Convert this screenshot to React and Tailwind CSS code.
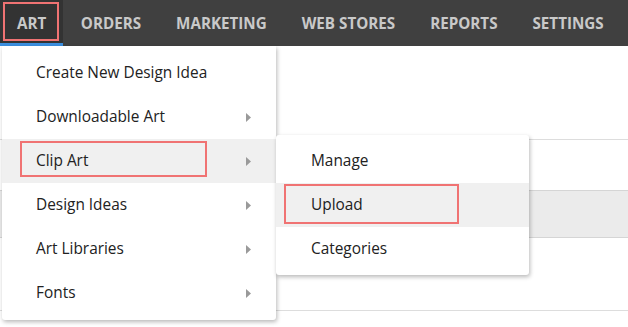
import React from "react";

const navItems = ["ART", "ORDERS", "MARKETING", "WEB STORES", "REPORTS", "SETTINGS"];

const artMenu = [
    { label: "Create New Design Idea" },
    { label: "Downloadable Art", sub: true },
    { label: "Clip Art", sub: true, active: true },
    { label: "Design Ideas", sub: true },
    { label: "Art Libraries", sub: true },
    { label: "Fonts", sub: true },
];

const clipMenu = [
    { label: "Manage" },
    { label: "Upload", active: true },
    { label: "Categories" },
];

function Caret() {
    return (
        <svg width="5" height="9" viewBox="0 0 5 9" className="absolute left-[244px] top-[18px]">
            <path d="M0 0 L5 4.5 L0 9 Z" fill="#9a9a9a" />
        </svg>
    );
}

export default function App() {
    return (
        <div className="relative w-[628px] h-[327px] bg-white overflow-hidden font-['Open_Sans',sans-serif]">
            {/* top nav */}
            <div className="flex h-[46px] bg-[#404040]">
                {navItems.map((item, i) => (
                    <div
                        key={item}
                        className={
                            i === 0
                                ? "relative shrink-0 flex items-center px-[17px] bg-[#333333] border-b-[3px] border-[#3b8fe0] pt-[3px]"
                                : "shrink-0 flex items-center px-[17.5px]"
                        }
                    >
                        <span className="whitespace-nowrap text-[15.2px] font-bold text-[#c9c9c9]">{item}</span>
                        {i === 0 && (
                            <div className="absolute left-[3px] top-[2px] w-[56px] h-[39px] border-2 border-[#f07373]" />
                        )}
                    </div>
                ))}
            </div>

            {/* page content behind menus */}
            <div className="flex flex-col">
                <div className="h-[94px] border-b border-[#dddddd]" />
                <div className="h-[50px]" />
                <div className="h-[48px] bg-[#ebebeb] border-y border-[#d5d5d5]" />
                <div className="h-[73px] border-b border-[#dddddd]" />
            </div>

            {/* art dropdown */}
            <div className="absolute left-[2px] top-[46px] w-[274px] bg-white pt-[5px] pb-[5px] rounded-b-[3px] shadow-[1px_2px_4px_rgba(0,0,0,0.28)]">
                {artMenu.map((m) => (
                    <div
                        key={m.label}
                        className={
                            "relative h-[44px] flex items-center pl-[34px] pb-[1px] text-[15.4px] text-[#222222] " +
                            (m.active ? "bg-[#f0f0f0]" : "")
                        }
                    >
                        {m.label}
                        {m.sub && <Caret />}
                        {m.active && (
                            <div className="absolute left-[18px] top-[2px] w-[187px] h-[36px] border-2 border-[#f07373]" />
                        )}
                    </div>
                ))}
            </div>

            {/* clip art submenu */}
            <div className="absolute left-[276px] top-[135px] w-[253px] bg-white py-[4px] rounded-[3px] shadow-[1px_2px_4px_rgba(0,0,0,0.28)]">
                {clipMenu.map((m) => (
                    <div
                        key={m.label}
                        className={
                            "relative h-[44px] flex items-center pl-[35px] pb-[1px] text-[15.4px] text-[#222222] " +
                            (m.active ? "bg-[#f0f0f0]" : "")
                        }
                    >
                        {m.label}
                        {m.active && (
                            <div className="absolute left-[8px] top-[1px] w-[175px] h-[40px] border-2 border-[#f07373]" />
                        )}
                    </div>
                ))}
            </div>
        </div>
    );
}
